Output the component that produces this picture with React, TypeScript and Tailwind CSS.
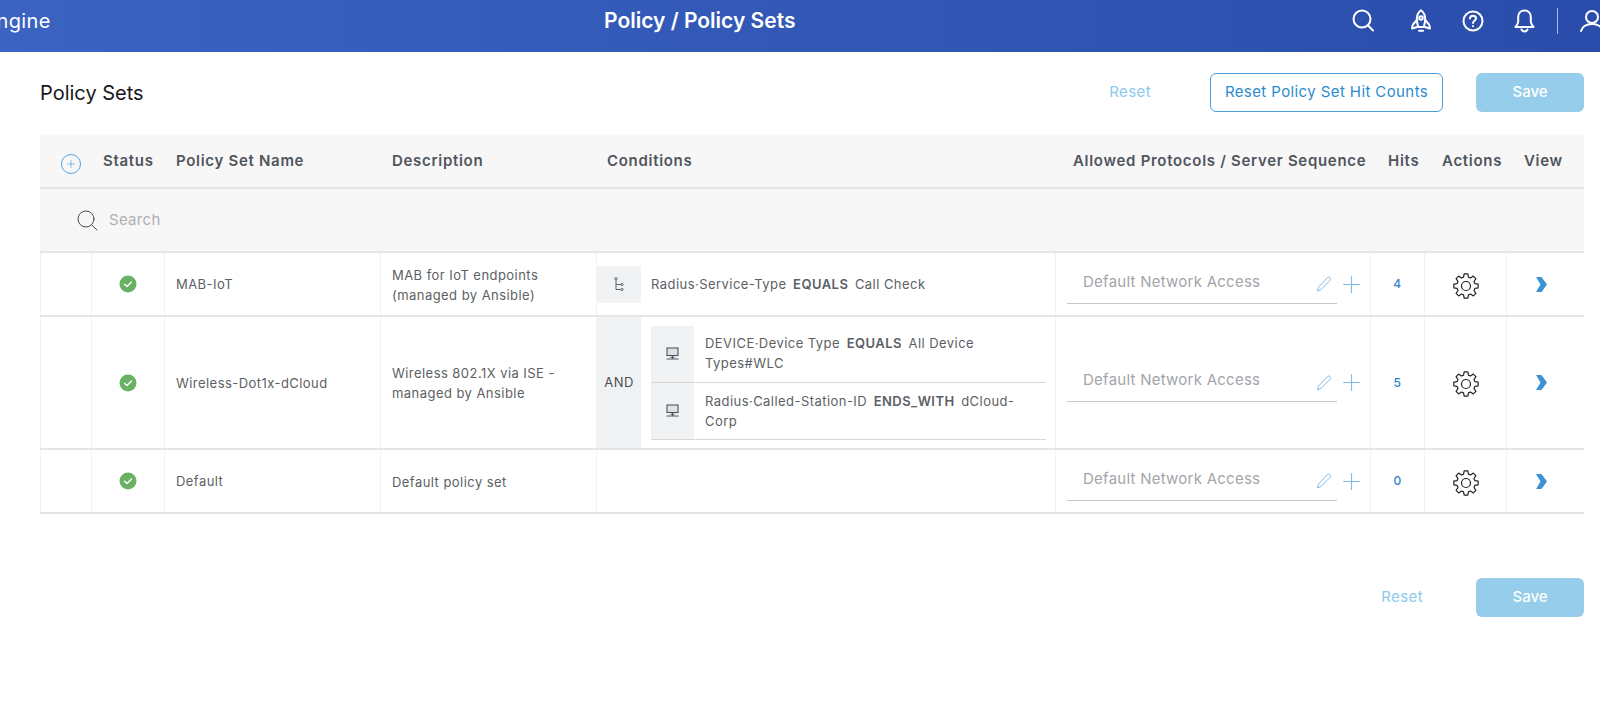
import { Plus } from "lucide-react";
import type { ReactNode } from "react";

const columns = "grid grid-cols-[52px_73px_216px_216px_459px_315px_54px_82px_77px]";
const cell = "border-r border-[#f2f2f2]";
const textColor = "text-[#5c5f65]";

// 8 toothed outline, teeth are small flat topped bumps
function gearPath() {
  const points: string[] = [];
  for (let i = 0; i < 8; i++) {
    const a = (i * Math.PI) / 4;
    const steps: [number, number][] = [
      [9.2, -0.27],
      [12.3, -0.15],
      [12.3, 0.15],
      [9.2, 0.27],
    ];
    for (const [r, off] of steps) {
      points.push(`${(13 + r * Math.sin(a + off)).toFixed(2)} ${(13 - r * Math.cos(a + off)).toFixed(2)}`);
    }
  }
  return `M${points.join("L")}Z`;
}

function GearIcon() {
  return (
    <svg width="26" height="26" viewBox="0 0 26 26" fill="none" stroke="#222222" strokeWidth="1.200" strokeLinejoin="round">
      <path d={gearPath()} />
      <circle cx="13" cy="13" r="4.500" />
    </svg>
  );
}

function HeaderSearchIcon() {
  return (
    <svg width="22" height="24" viewBox="0 0 22 24" fill="none" stroke="white" strokeWidth="2" strokeLinecap="round">
      <circle cx="10" cy="10" r="8.500" />
      <path d="M16 16.500 21 21.500" />
    </svg>
  );
}

function RocketIcon() {
  return (
    <svg width="20" height="24" viewBox="0 0 20 24" fill="none" stroke="white" strokeWidth="2" strokeLinejoin="round" strokeLinecap="round">
      <path d="M10 1.200C7 3.500 5.800 7 5.800 10c0 2.500.6 5 1.400 8h5.600c.8-3 1.400-5.500 1.400-8 0-3-1.200-6.500-4.200-8.800z" />
      <circle cx="10" cy="9" r="1.800" />
      <path d="M5.800 11 2 15.500c-.6.8-.9 2-.9 4l5-1.500M14.200 11l3.800 4.500c.6.8.9 2 .9 4l-5-1.500M8 21.800h4" />
    </svg>
  );
}

function HelpIcon() {
  return (
    <svg width="22" height="22" viewBox="0 0 22 22" fill="none" stroke="white" strokeWidth="2" strokeLinecap="round">
      <circle cx="11" cy="11" r="9.500" />
      <path d="M8 8.500c0-1.700 1.300-2.800 3-2.800s3 1 3 2.600c0 2.400-3 2.400-3 4.600" />
      <path d="M11 16v.2" />
    </svg>
  );
}

function BellIcon() {
  return (
    <svg width="21" height="24" viewBox="0 0 21 24" fill="none" stroke="white" strokeWidth="2" strokeLinejoin="round" strokeLinecap="round">
      <path d="M10.500 1.500c-4 0-6.300 3-6.300 6.500v4.500c0 2-1 3.500-2.700 5.500h18c-1.700-2-2.700-3.500-2.700-5.500V8c0-3.500-2.300-6.500-6.300-6.500z" />
      <path d="M7.500 20.500c.6 1.300 1.700 2 3 2s2.400-.7 3-2" />
    </svg>
  );
}

function UserIcon() {
  return (
    <svg width="26" height="24" viewBox="0 0 26 24" fill="none" stroke="white" strokeWidth="2" strokeLinecap="round">
      <circle cx="13" cy="8" r="6" />
      <path d="M2 22c1.500-4.500 5-7 11-7s9.500 2.500 11 7" />
    </svg>
  );
}

function StatusDot() {
  return (
    <svg width="18" height="18" viewBox="0 0 18 18">
      <circle cx="9" cy="9" r="8.500" fill="#6ab165" />
      <path d="M5.500 9.200 8 11.500l4.500-4.500" fill="none" stroke="white" strokeWidth="1.300" strokeLinecap="round" strokeLinejoin="round" />
    </svg>
  );
}

function TreeIcon() {
  return (
    <svg width="10" height="15" viewBox="0 0 10 15" fill="none" stroke="#5b6470" strokeWidth="1">
      <circle cx="2" cy="1.800" r="1.200" />
      <path d="M2 3v9.500h5M2 7.500h5" />
      <circle cx="8" cy="7.500" r="1.100" />
      <circle cx="8" cy="12.500" r="1.100" />
    </svg>
  );
}

function DeviceIcon() {
  return (
    <svg width="13" height="14" viewBox="0 0 13 14" fill="none" stroke="#4d5560" strokeWidth="1.100">
      <rect x="1" y="1" width="11" height="7.500" fill="#dfe1e4" />
      <path d="M6.500 8.500v3.500M.5 12h12M4.500 10.200h4" />
    </svg>
  );
}

function PencilIcon() {
  return (
    <svg width="16" height="16" viewBox="0 0 16 16" fill="none" stroke="#7dbce8" strokeWidth="1" strokeLinejoin="round" className="-ml-[21px] shrink-0">
      <path d="M11.500 1.500c.8-.6 1.800-.5 2.500.2s.8 1.700.2 2.500L5 13.500 1.500 15l1-3.800z" />
    </svg>
  );
}

function ViewChevron() {
  return (
    <svg width="11" height="15" viewBox="0 0 11 15" fill="#3b93d6">
      <path d="M0 0h5.500l5.500 7.500-5.500 7.500H0l4.500-7.500z" />
    </svg>
  );
}

function CondText({ left, op, right }: { left: string; op: string; right: string }) {
  return (
    <p className={`text-[13px] leading-[20px] tracking-[0.45px] ${textColor}`}>
      {left} <b className="mx-[2.500px] font-semibold">{op}</b> {right}
    </p>
  );
}

function Row({ name, description, hits, height, conditions }: { name: string; description: ReactNode; hits: string; height: string; conditions: ReactNode }) {
  return (
    <div className={`${columns} ${height} border-b-2 border-[#e5e5e5] text-[13px] tracking-[0.45px] ${textColor}`}>
      <div className={`${cell} border-l`} />
      <div className={`${cell} flex items-center justify-center`}>
        <StatusDot />
      </div>
      <div className={`${cell} flex items-center pl-[11px] pt-[2px]`}>{name}</div>
      <div className={`${cell} flex items-center pl-[11px] pr-3 pt-[1px] leading-[20px]`}>{description}</div>
      <div className={cell}>{conditions}</div>
      <div className={`${cell} flex items-center pl-[11px]`}>
        <div className="h-[39px] w-[270px] shrink-0 border-b border-[#c8c8c8] pl-4 pt-[7px] text-[15px] leading-[20px] tracking-[0.25px] text-[#a2a5aa]">
          Default Network Access
        </div>
        <PencilIcon />
        <Plus size={27} strokeWidth={1} className="ml-[6px] shrink-0 text-[#7dbce8]" />
      </div>
      <div className={`${cell} flex items-center justify-center text-xs font-medium text-[#2f84c9]`}>{hits}</div>
      <div className={`${cell} flex items-center justify-center pt-[3px]`}>
        <GearIcon />
      </div>
      <div className="flex items-center justify-center pr-[8px]">
        <ViewChevron />
      </div>
    </div>
  );
}

function IconBox({ children, className }: { children: ReactNode; className: string }) {
  return <div className={`flex w-[43px] shrink-0 items-center justify-center bg-[#f1f2f4] ${className}`}>{children}</div>;
}

export default function App() {
  return (
    <div className="h-[704px] w-[1600px] overflow-hidden bg-white font-['Inter','Noto_Sans',sans-serif]">
      <header className="flex h-[52px] items-center overflow-hidden bg-gradient-to-r from-[#3b63c2] to-[#2a4dab] pb-[10px] text-white">
        <span className="-ml-[16px] w-[200px] shrink-0 text-[20px] tracking-[0.4px]">Engine</span>
        <h1 className="ml-[420px] text-[21px] font-semibold">Policy / Policy Sets</h1>
        <div className="-mr-[5px] ml-auto flex shrink-0 items-center">
          <HeaderSearchIcon />
          <div className="ml-[37px]"><RocketIcon /></div>
          <div className="ml-[31px]"><HelpIcon /></div>
          <div className="ml-[30px]"><BellIcon /></div>
          <div className="ml-[22px] h-[26px] w-px bg-[#a8b8e0]" />
          <div className="ml-[21px]"><UserIcon /></div>
        </div>
      </header>

      <main className="pl-[40px] pr-[16px]">
        <div className="flex h-[83px] items-center pb-[2px]">
          <h2 className="flex-1 text-[20px] text-[#17171a]">Policy Sets</h2>
          <button className="mr-[59px] text-[15px] tracking-[0.4px] text-[#8ccbee]">Reset</button>
          <button className="mr-[33px] h-[39px] w-[233px] rounded-md border border-[#4c9ed9] text-[15px] tracking-[0.4px] text-[#2b8ccf]">Reset Policy Set Hit Counts</button>
          <button className="h-[39px] w-[108px] rounded-md bg-[#96cdea] text-[15px] font-medium text-white">Save</button>
        </div>

        <div className={`${columns} h-[54px] items-center border-b-2 border-[#e5e5e5] bg-[#f7f7f7] pt-[1px] text-[15px] font-semibold tracking-[0.7px] text-[#50555d]`}>
          <div className="flex justify-center pl-[10px] pt-[4px]">
            <span className="flex h-[20px] w-[20px] items-center justify-center rounded-full border border-[#4ea3dd]">
              <Plus size={12} strokeWidth={1.300} className="text-[#4ea3dd]" />
            </span>
          </div>
          <div className="pl-[11px]">Status</div>
          <div className="pl-[11px]">Policy Set Name</div>
          <div className="pl-[11px]">Description</div>
          <div className="pl-[10px]">Conditions</div>
          <div className="whitespace-nowrap pl-[17px]">Allowed Protocols / Server Sequence</div>
          <div className="pl-[17px]">Hits</div>
          <div className="pl-[17px]">Actions</div>
          <div className="pl-[17px]">View</div>
        </div>

        <div className="flex h-[64px] items-center border-b-2 border-[#e5e5e5] bg-[#f7f7f7] pl-[36px]">
          <svg width="22" height="22" viewBox="0 0 22 22" fill="none" stroke="#4d4d50" strokeWidth="1" strokeLinecap="round">
            <circle cx="10" cy="10" r="8" />
            <path d="M15.500 15.800 21 21" />
          </svg>
          <span className="ml-[11px] text-[15px] tracking-[0.3px] text-[#b0b0b3]">Search</span>
        </div>

        <Row
          name="MAB-IoT"
          description={<span>MAB for IoT endpoints<br />(managed by Ansible)</span>}
          hits="4"
          height="h-[64px]"
          conditions={
            <div className="flex h-full items-center">
              <div className="flex h-[37px] w-[44px] shrink-0 items-center justify-center bg-[#f1f2f4]"><TreeIcon /></div>
              <div className="pl-[10px]">
                <CondText left="Radius·Service-Type" op="EQUALS" right="Call Check" />
              </div>
            </div>
          }
        />
        <Row
          name="Wireless-Dot1x-dCloud"
          description={<span>Wireless 802.1X via ISE -<br />managed by Ansible</span>}
          hits="5"
          height="h-[133px]"
          conditions={
            <div className="flex h-full">
              <div className="flex w-[44px] shrink-0 items-center justify-center bg-[#f1f2f4] text-[13px] text-[#4d4f53]">AND</div>
              <div className="ml-[10px] w-[395px] pt-[9px]">
                <div className="flex h-[57px] border-b border-[#d8d8d8]">
                  <IconBox className="h-[56px]"><DeviceIcon /></IconBox>
                  <div className="flex items-center pb-[2px] pl-[11px] pr-4">
                    <CondText left="DEVICE·Device Type" op="EQUALS" right="All Device Types#WLC" />
                  </div>
                </div>
                <div className="flex h-[57px] border-b border-[#d8d8d8]">
                  <IconBox className="h-[56px]"><DeviceIcon /></IconBox>
                  <div className="flex items-center pl-[11px] pr-4">
                    <CondText left="Radius·Called-Station-ID" op="ENDS_WITH" right="dCloud-Corp" />
                  </div>
                </div>
              </div>
            </div>
          }
        />
        <Row name="Default" description="Default policy set" hits="0" height="h-[64px]" conditions={null} />

        <div className="mt-[64px] flex items-center justify-end">
          <button className="mr-[53px] text-[15px] tracking-[0.4px] text-[#8ccbee]">Reset</button>
          <button className="h-[39px] w-[108px] rounded-md bg-[#96cdea] text-[15px] font-medium text-white">Save</button>
        </div>
      </main>
    </div>
  );
}
